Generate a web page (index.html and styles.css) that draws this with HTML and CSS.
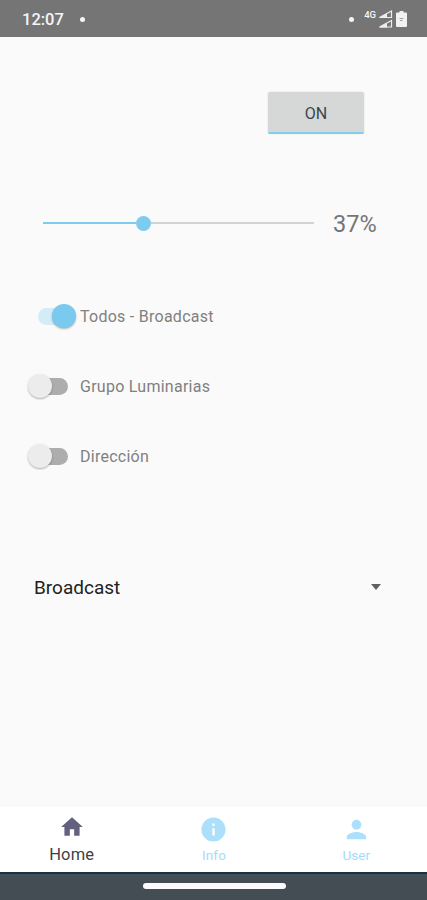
FILE: index.html
```html
<!DOCTYPE html>
<html lang="es">
<head>
<meta charset="utf-8">
<meta name="viewport" content="width=device-width">
<title>Broadcast</title>
<link rel="stylesheet" href="styles.css">
</head>
<body>
<header class="status">
  <span class="clock">12:07</span>
  <i class="dot"></i>
  <span class="spacer"></span>
  <i class="dot"></i>
  <span class="network">4G</span>
  <svg class="signal" width="15" height="20" viewBox="0 0 15 20"><path d="M1.5 8.500 13.500 2v6.500zM1.500 18 13.500 11.500V18z" fill="none" stroke="#eee" stroke-width="1.200"/><path d="M1 9 9 4.500V9zM1 18.500l8-4.500v4.500z" fill="#eee"/></svg>
  <svg class="battery" width="11" height="16" viewBox="0 0 11 16"><path d="M3.500 0h4v1.500H10q1 0 1 1V15q0 1-1 1H1q-1 0-1-1V2.500q0-1 1-1h2.500z" fill="#f2f2f2"/><path d="M3.500 7.500h4M4 9.500h2.500" stroke="#a0a0a0" stroke-width="1.200"/></svg>
</header>
<main class="content">
  <button class="power">ON</button>
  <div class="dimmer">
    <div class="track"><div class="fill"></div><div class="thumb"></div><div class="rest"></div></div>
    <span class="percent">37%</span>
  </div>
  <div class="switches">
    <label class="option"><span class="switch on"><i class="knob"></i></span><span class="name">Todos - Broadcast</span></label>
    <label class="option"><span class="switch"><i class="knob"></i></span><span class="name">Grupo Luminarias</span></label>
    <label class="option"><span class="switch"><i class="knob"></i></span><span class="name">Dirección</span></label>
  </div>
  <div class="select"><span>Broadcast</span><i class="caret"></i></div>
</main>
<nav class="tabs">
  <a class="tab active"><svg width="26" height="26" viewBox="0 0 24 24"><path d="M10 20v-6h4v6h5v-8h3L12 3 2 12h3v8z"/></svg><span>Home</span></a>
  <a class="tab"><svg width="29" height="29" viewBox="0 0 24 24"><path d="M12 2C6.480 2 2 6.480 2 12s4.480 10 10 10 10-4.480 10-10S17.520 2 12 2zm1 15h-2v-6h2v6zm0-8h-2V7h2v2z"/></svg><span>Info</span></a>
  <a class="tab"><svg width="29" height="29" viewBox="0 0 24 24"><path d="M12 12c2.210 0 4-1.790 4-4s-1.790-4-4-4-4 1.790-4 4 1.790 4 4 4zm0 2c-2.670 0-8 1.340-8 4v2h16v-2c0-2.660-5.330-4-8-4z"/></svg><span>User</span></a>
</nav>
<footer class="gesture"><i class="pill"></i></footer>
</body>
</html>
```
FILE: styles.css
```css
* { box-sizing: border-box; }
body {
  margin: 0;
  height: 900px;
  display: flex;
  flex-direction: column;
  overflow: hidden;
  background: #fafafa;
  font-family: Roboto, sans-serif;
  color: #757575;
}
.status {
  height: 37px;
  flex: none;
  display: flex;
  align-items: center;
  padding: 1px 20px 0 22px;
  background: #757575;
  color: #f5f5f5;
}
.clock { font-size: 16.5px; font-weight: 500; line-height: 20px; width: 42px; margin-top: 1px; }
.dot { width: 5px; height: 5px; border-radius: 50%; background: #f5f5f5; margin-left: 16px; }
.spacer { flex: 1; }
.network { font-size: 9.5px; font-weight: 500; line-height: 10px; margin: -9px 2px 0 10px; }
.signal { margin-right: 3px; }
.content { flex: 1; min-height: 0; display: flex; flex-direction: column; }
.power {
  width: 96px;
  height: 42px;
  margin: 55px 0 0 268px;
  padding: 3px 0 0;
  border: 0;
  border-bottom: 2px solid #81ccef;
  border-radius: 2px;
  background: #d6d8d8;
  box-shadow: 0 0 2px #ddd;
  color: #37474f;
  font: 400 16px/38px Roboto, sans-serif;
}
.dimmer { display: flex; align-items: center; height: 40px; margin: 69px 50px 0 43px; }
.track { width: 271px; display: flex; align-items: center; }
.fill { width: 93px; height: 2px; background: #7dcbef; }
.thumb { width: 15px; height: 15px; border-radius: 50%; background: #7dcbef; }
.rest { flex: 1; height: 2px; background: #d3d3d3; }
.percent { margin: 2px 0 0 19px; font-size: 23.5px; }
.switches { flex: none; margin: 53px 0 0 38px; display: flex; flex-direction: column; gap: 30px; }
.option { height: 40px; display: flex; align-items: center; }
.switch { width: 30px; height: 17px; border-radius: 9px; background: #adadad; display: flex; align-items: center; }
.knob { flex: none; width: 24px; height: 24px; margin-left: -10px; border-radius: 50%; background: #ececec; box-shadow: 0 1px 2px rgba(0, 0, 0, .3); }
.switch.on { background: #d3ecf8; }
.switch.on .knob { margin-left: 14px; background: #7ac9ee; }
.name { margin: 2px 0 0 12px; font-size: 16px; line-height: 20px; letter-spacing: .26px; color: #808080; }
.select {
  height: 40px;
  flex: none;
  margin: 91px 46px 0 34px;
  display: flex;
  align-items: center;
  justify-content: space-between;
  font-size: 19px;
  color: #222;
}
.caret { border: 5.5px solid transparent; border-width: 6px 5.5px 0; border-top-color: #606060; }
.tabs {
  height: 66px;
  flex: none;
  display: grid;
  grid-template-columns: repeat(3, 1fr);
  background: #fff;
  box-shadow: 0 -1px 1px #f5f5f5;
}
.tab { display: flex; flex-direction: column; align-items: center; padding: 9px 0 0 1px; color: #a5dcf8; font-size: 13.5px; letter-spacing: .1px; line-height: 18px; }
.tab svg { fill: #ace0fa; }
.tab span { margin-top: 2px; }
.tab.active { padding-top: 8px; color: #3f4047; font-size: 16.5px; }
.tab.active svg { fill: #63617f; }
.tab.active span { margin-top: 6px; }
.gesture {
  height: 28px;
  flex: none;
  display: flex;
  justify-content: center;
  padding: 9px 0 0 1px;
  border-top: 2px solid #153346;
  background: #444d53;
}
.pill { width: 143px; height: 6px; border-radius: 3px; background: #fdfaff; }
```
